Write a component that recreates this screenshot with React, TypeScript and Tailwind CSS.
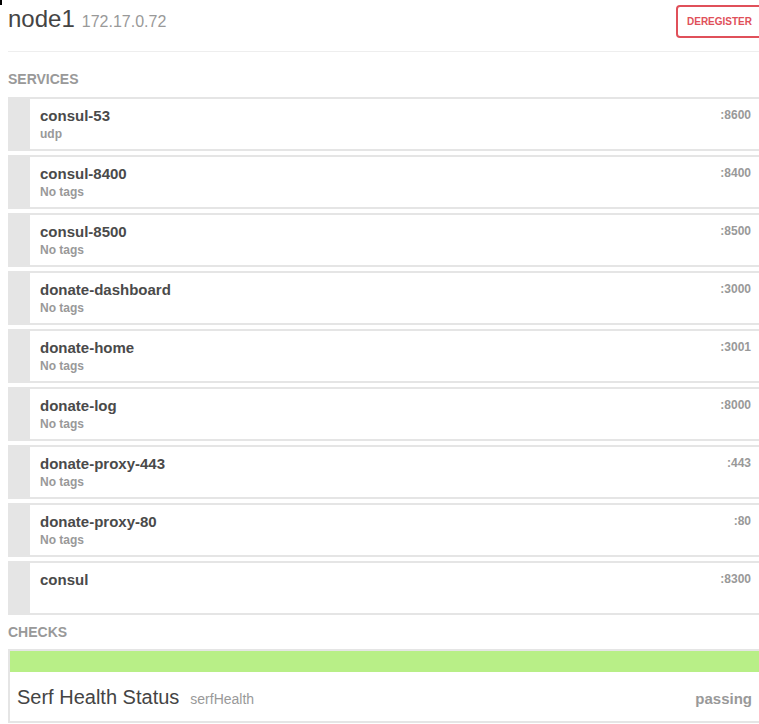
import React from "react";

const services: { name: string; tag?: string; port: string }[] = [
  { name: "consul-53", tag: "udp", port: ":8600" },
  { name: "consul-8400", tag: "No tags", port: ":8400" },
  { name: "consul-8500", tag: "No tags", port: ":8500" },
  { name: "donate-dashboard", tag: "No tags", port: ":3000" },
  { name: "donate-home", tag: "No tags", port: ":3001" },
  { name: "donate-log", tag: "No tags", port: ":8000" },
  { name: "donate-proxy-443", tag: "No tags", port: ":443" },
  { name: "donate-proxy-80", tag: "No tags", port: ":80" },
  { name: "consul", port: ":8300" },
];

export default function App() {
  return (
    <div
      className="relative w-[759px] h-[724px] overflow-hidden bg-white"
      style={{ fontFamily: '"Liberation Sans", Arial, sans-serif' }}
    >
      <div className="absolute top-0 left-0 w-[2px] h-[5px] bg-black" />
      <div className="ml-[8px] w-[753px]">
        <div className="h-[52px] border-b border-[#eeeeee] flex items-start justify-between pt-[5px]">
          <div className="flex items-baseline gap-[7px]">
            <span className="text-[24px] leading-[28px] text-[#444444]">node1</span>
            <span className="text-[16px] leading-[20px] text-[#999999]">172.17.0.72</span>
          </div>
          <button className="h-[33px] mr-[-2px] px-[9px] border-2 border-[#e0505a] rounded-[4px] text-[10px] font-bold text-[#e0505a] leading-none">
            DEREGISTER
          </button>
        </div>

        <div className="mt-[17px] mb-[8px] text-[14px] leading-[20px] font-bold text-[#999999]">SERVICES</div>

        <div className="flex flex-col gap-[4px]">
          {services.map((s) => (
            <div key={s.name} className="bg-[#e5e5e5] pl-[22px] py-[2px]">
              <div className="bg-white h-[50px] flex justify-between pl-[10px] pr-[10px] pt-[7px]">
                <div>
                  <div className="text-[15px] leading-[20px] font-bold text-[#4a4a4a]">{s.name}</div>
                  {s.tag && (
                    <div className="text-[12px] leading-[17px] font-bold text-[#999999]">{s.tag}</div>
                  )}
                </div>
                <div className="pt-[1px] text-[12px] leading-[16px] font-bold text-[#999999]">{s.port}</div>
              </div>
            </div>
          ))}
        </div>

        <div className="mt-[7px] mb-[7px] text-[14px] leading-[20px] font-bold text-[#999999]">CHECKS</div>

        <div className="border-2 border-[#e5e5e5] h-[74px]">
          <div className="h-[21px] bg-[#b8ef87]" />
          <div className="flex items-baseline justify-between pl-[7px] pr-[7px] pt-[13px]">
            <div className="flex items-baseline gap-[11px]">
              <span className="text-[20px] leading-[24px] text-[#444444]">Serf Health Status</span>
              <span className="text-[14px] leading-[20px] text-[#999999]">serfHealth</span>
            </div>
            <span className="text-[15px] leading-[18px] font-bold text-[#999999]">passing</span>
          </div>
        </div>
      </div>
    </div>
  );
}
